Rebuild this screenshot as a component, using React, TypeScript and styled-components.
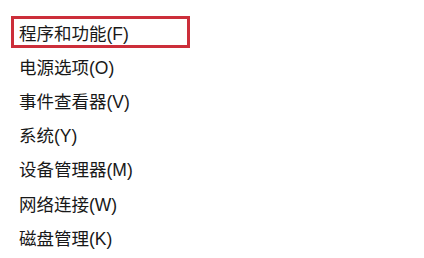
import React from 'react';
import styled, { createGlobalStyle } from 'styled-components';

const GlobalStyle = createGlobalStyle`
  html, body {
    margin: 0;
    padding: 0;
    background: #ffffff;
  }
`;

const Menu = styled.ul`
  list-style: none;
  margin: 0;
  padding: 15px 0 0 11px;
  font-family: "Liberation Sans", "Noto Sans CJK SC", sans-serif;
  font-size: 17.5px;
  color: #181818;
`;

const Item = styled.li`
  height: 34.2px;
  display: flex;
  align-items: center;
`;

const Label = styled.span<{ $selected?: boolean }>`
  box-sizing: border-box;
  display: flex;
  align-items: center;
  width: 179px;
  height: 32px;
  padding-left: 5px;
  border: 3px solid ${(p) => (p.$selected ? '#cc2e3a' : 'transparent')};
  white-space: nowrap;
`;

const items = [
  '程序和功能(F)',
  '电源选项(O)',
  '事件查看器(V)',
  '系统(Y)',
  '设备管理器(M)',
  '网络连接(W)',
  '磁盘管理(K)',
];

const App: React.FC = () => {
  return (
    <>
      <GlobalStyle />
      <Menu>
        {items.map((text, i) => (
          <Item key={text}>
            <Label $selected={i === 0}>{text}</Label>
          </Item>
        ))}
      </Menu>
    </>
  );
};

export default App;
